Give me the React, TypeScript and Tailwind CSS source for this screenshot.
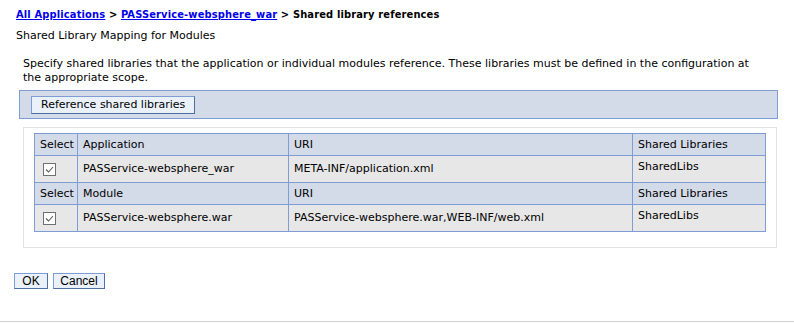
import React from 'react';

const Check: React.FC = () => (
  <span className="inline-flex w-[13px] h-[13px] border border-[#707070] bg-white items-center justify-center align-middle ml-[3px]">
    <svg width="11" height="11" viewBox="0 0 11 11">
      <path d="M2 5.5 L4.5 8 L9 3" fill="none" stroke="#5a5a5a" strokeWidth="1.1" />
    </svg>
  </span>
);

const App: React.FC = () => {
  const th = 'h-[22px] px-[5px] bg-[#d3dae8] border border-[#7f9dd4] font-normal text-left align-middle';
  const td = 'h-[27px] px-[5px] bg-[#e7e7e7] border border-[#7f9dd4] align-middle';

  const sections = [
    { label: 'Application', name: 'PASService-websphere_war', uri: 'META-INF/application.xml' },
    { label: 'Module', name: 'PASService-websphere.war', uri: 'PASService-websphere.war,WEB-INF/web.xml' },
  ];

  return (
    <div className="w-[794px] h-[323px] bg-white text-[11px] leading-[14px] text-black font-['Verdana','DejaVu_Sans',sans-serif] flex flex-col">
      <div className="pl-[16px] pt-[8px]">
        {/* Breadcrumb */}
        <div className="font-bold tracking-[0.15px] font-['DejaVu_Sans_Condensed','DejaVu_Sans',sans-serif]">
          <a href="#" className="text-[#0000ee] underline">All Applications</a>
          {' > '}
          <a href="#" className="text-[#0000ee] underline">PASService-websphere_war</a>
          {' > Shared library references'}
        </div>
        <div className="mt-[7px]">Shared Library Mapping for Modules</div>
      </div>

      <div className="pl-[19px] pr-[16px] mt-[14px]">
        <p className="pl-[4px] pr-[18px]">
          Specify shared libraries that the application or individual modules reference. These libraries must be defined in the configuration at the appropriate scope.
        </p>

        {/* Toolbar */}
        <div className="mt-[5px] h-[29px] bg-[#d3dae8] border border-[#7f9dd4] flex items-center pl-[11px]">
          <button className="h-[18px] px-[9px] bg-[#eaf1fb] border border-[#7f9dd4] border-r-[#4f6f9f] border-b-[#4f6f9f] text-[11px] leading-[14px]">
            Reference shared libraries
          </button>
        </div>

        {/* Table panel */}
        <div className="mt-[8px] ml-[4px] mr-[1px] h-[121px] border border-[#e2e2e2] pt-[5px] px-[10px]">
          <table className="w-full table-fixed border-collapse">
            <colgroup>
              <col className="w-[43px]" />
              <col className="w-[211px]" />
              <col className="w-[344px]" />
              <col />
            </colgroup>
            <tbody>
              {sections.map((s) => (
                <React.Fragment key={s.label}>
                  <tr>
                    <th className={th}>Select</th>
                    <th className={th}>{s.label}</th>
                    <th className={th}>URI</th>
                    <th className={th}>Shared Libraries</th>
                  </tr>
                  <tr>
                    <td className={td}><Check /></td>
                    <td className={td}>{s.name}</td>
                    <td className={td}>{s.uri}</td>
                    <td className={`${td} !align-top pt-[4px]`}>SharedLibs</td>
                  </tr>
                </React.Fragment>
              ))}
            </tbody>
          </table>
        </div>
      </div>

      {/* Buttons */}
      <div className="pl-[14px] mt-[25px] flex gap-[5px] font-['Liberation_Sans',sans-serif] text-[12px]">
        <button className="h-[16px] w-[34px] bg-[#eaf1fb] border border-[#7f9dd4] border-r-[#4f6f9f] border-b-[#4f6f9f] leading-[14px]">OK</button>
        <button className="h-[16px] w-[52px] bg-[#eaf1fb] border border-[#7f9dd4] border-r-[#4f6f9f] border-b-[#4f6f9f] leading-[14px]">Cancel</button>
      </div>

      <div className="mt-auto mb-[1px] border-b border-[#cfcfcf]" />
    </div>
  );
};

export default App;
